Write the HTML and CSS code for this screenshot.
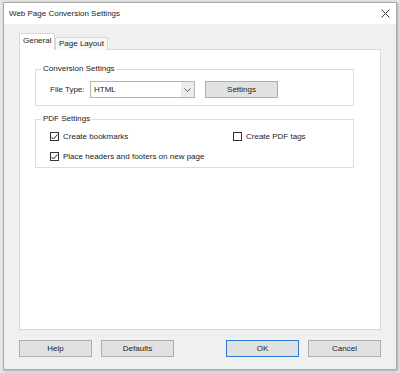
FILE: index.html
```html
<!DOCTYPE html>
<html lang="en">
<head>
    <meta charset="UTF-8">
    <title>Web Page Conversion Settings</title>
    <link rel="stylesheet" href="styles.css">
</head>
<body>

    <!-- Dialog window -->
    <div class="window">
        <div class="title-bar">
            <span class="title">Web Page Conversion Settings</span>
            <svg class="close" width="9" height="9" viewBox="0 0 9 9"><path d="M0.5 0.5 L8.5 8.5 M8.5 0.5 L0.5 8.5" stroke="#333" stroke-width="1"/></svg>
        </div>

        <div class="content">
            <!-- Tabs -->
            <div class="tabs">
                <div class="tab active">General</div>
                <div class="tab">Page Layout</div>
            </div>

            <div class="tab-panel">
                <fieldset class="group">
                    <legend>Conversion Settings</legend>
                    <div class="type-row">
                        <span class="label">File Type:</span>
                        <div class="select">
                            <span class="select-value">HTML</span>
                            <span class="select-arrow">
                                <svg width="7" height="4" viewBox="0 0 7 4"><path d="M0.5 0.5 L3.5 3.5 L6.5 0.5" fill="none" stroke="#555" stroke-width="1"/></svg>
                            </span>
                        </div>
                        <button class="btn">Settings</button>
                    </div>
                </fieldset>

                <fieldset class="group pdf-group">
                    <legend>PDF Settings</legend>
                    <div class="check-grid">
                        <div class="check"><span class="box checked"><svg width="7" height="6" viewBox="0 0 7 6"><path d="M0.5 3 L2.5 5 L6.5 0.5" fill="none" stroke="#222" stroke-width="1"/></svg></span>Create bookmarks</div>
                        <div class="check"><span class="box"></span>Create PDF tags</div>
                        <div class="check wide"><span class="box checked"><svg width="7" height="6" viewBox="0 0 7 6"><path d="M0.5 3 L2.5 5 L6.5 0.5" fill="none" stroke="#222" stroke-width="1"/></svg></span>Place headers and footers on new page</div>
                    </div>
                </fieldset>
            </div>

            <!-- Buttons -->
            <div class="buttons">
                <button class="btn">Help</button>
                <button class="btn">Defaults</button>
                <span class="spacer"></span>
                <button class="btn default">OK</button>
                <button class="btn">Cancel</button>
            </div>
        </div>
    </div>

</body>
</html>
```

FILE: styles.css
```css
body {
    margin: 0;
    background-color: #e6e6e6;
    font-family: "Liberation Sans", Arial, sans-serif;
    font-size: 8px;
    color: #222;
    height: 373px;
    overflow: hidden;
}

.window {
    margin: 2px 0 0 3px;
    width: 392px;
    height: 366px;
    background-color: #f0f0f0;
    border: 1px solid #a9a9a9;
    box-shadow: 1px 1px 3px rgba(0, 0, 0, 0.25);
}

.title-bar {
    height: 21px;
    background-color: #fff;
    display: flex;
    align-items: center;
    justify-content: space-between;
    padding: 0 6px 0 5px;
}

.title {
    font-size: 8px;
    color: #222;
}

.content {
    padding: 9px 15px 0 15px;
}

.tabs {
    display: flex;
    align-items: flex-end;
    height: 16px;
}

.tab {
    height: 12px;
    line-height: 12px;
    padding: 0 3px;
    background-color: #f7f7f7;
    border: 1px solid #d9d9d9;
    border-bottom: none;
    margin-bottom: -1px;
    position: relative;
}

.tab.active {
    height: 16px;
    line-height: 14px;
    width: 28px;
    padding: 0 3px;
    background-color: #fff;
    z-index: 1;
}

.tab-panel {
    height: 265px;
    background-color: #fff;
    border: 1px solid #d9d9d9;
    padding: 14px 0 0 15px;
}

.group {
    width: 298px;
    margin: 0;
    padding: 7px 5px 7px 14px;
    border: 1px solid #dcdcdc;
}

.group legend {
    padding: 0 2px;
    margin-left: -9px;
    line-height: 10px;
    color: #222;
}

.pdf-group {
    margin-top: 8px;
    padding-top: 7px;
    padding-bottom: 5px;
}

.type-row {
    display: flex;
    align-items: center;
    height: 17px;
}

.label {
    width: 40px;
}

.select {
    width: 103px;
    height: 15px;
    border: 1px solid #b5b5b5;
    background-color: #fff;
    display: flex;
    align-items: center;
    margin-right: 10px;
}

.select-value {
    flex: 1;
    padding-left: 3px;
}

.select-arrow {
    width: 13px;
    height: 15px;
    background-color: #ececec;
    display: flex;
    align-items: center;
    justify-content: center;
}

.btn {
    width: 73px;
    height: 17px;
    padding: 0;
    font-family: inherit;
    font-size: 8px;
    color: #222;
    background-color: #e1e1e1;
    border: 1px solid #adadad;
}

.btn.default {
    border-color: #2a7bd4;
}

.check-grid {
    display: grid;
    grid-template-columns: 183px 1fr;
    row-gap: 9px;
}

.check {
    display: flex;
    align-items: center;
    height: 11px;
}

.check.wide {
    grid-column: 1 / 3;
}

.box {
    width: 7px;
    height: 7px;
    border: 1px solid #333;
    margin-right: 4px;
    display: flex;
    align-items: center;
    justify-content: center;
    background-color: #fff;
}

.buttons {
    display: flex;
    gap: 9px;
    margin-top: 10px;
}

.spacer {
    flex: 1;
}
```
